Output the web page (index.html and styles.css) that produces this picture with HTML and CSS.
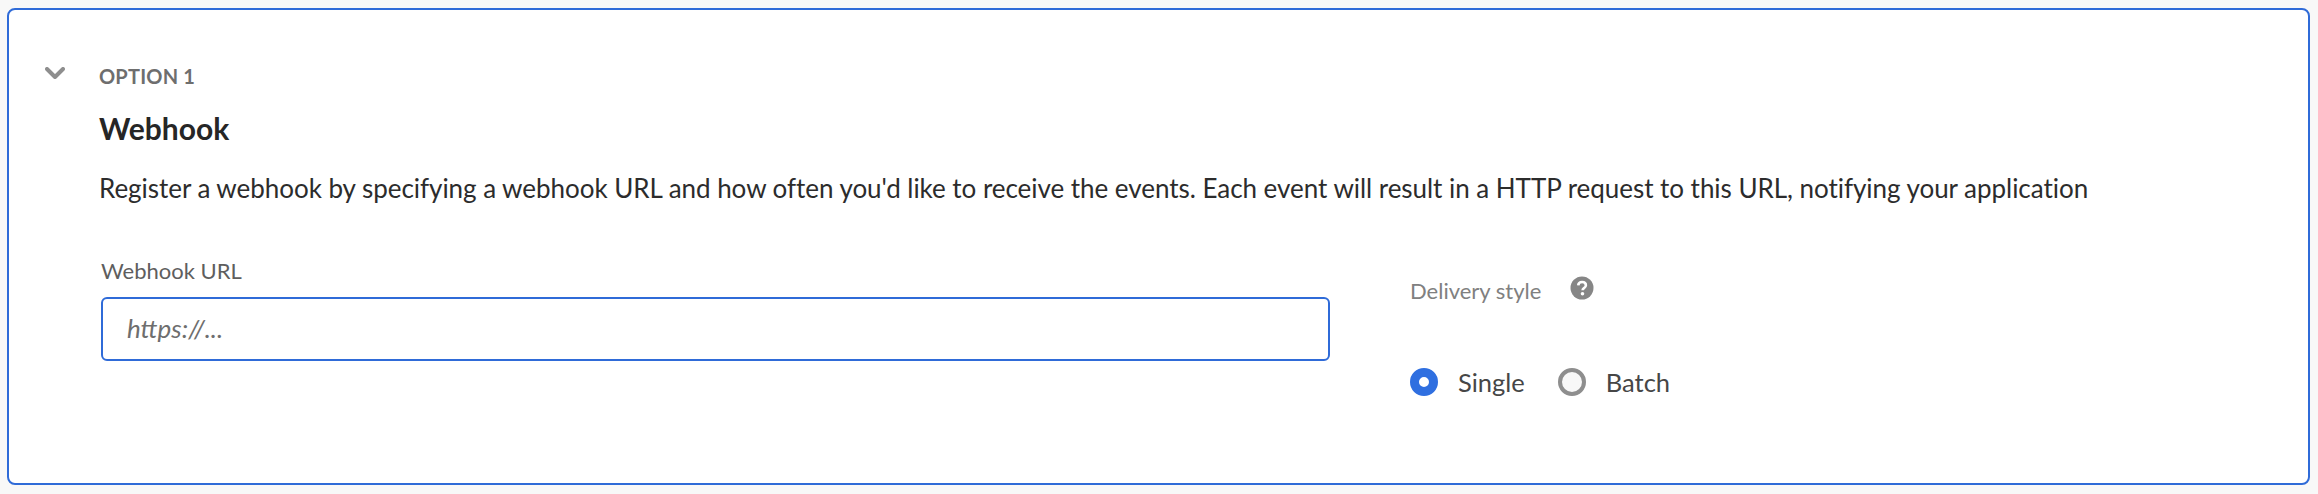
FILE: index.html
```html
<!DOCTYPE html>
<html lang="en">
<head>
<meta charset="utf-8">
<title>Webhook</title>
<link rel="stylesheet" href="styles.css">
</head>
<body>
<section class="card">
  <div class="head">
    <svg class="chevron" width="20" height="12" viewBox="0 0 20 12" aria-hidden="true"><path d="M2 2 L10 10 L18 2" fill="none" stroke="#8e8e8e" stroke-width="4" stroke-linecap="round" stroke-linejoin="round"/></svg>
    <div class="eyebrow">OPTION 1</div>
  </div>
  <div class="content">
    <h2 class="title">Webhook</h2>
    <p class="desc">Register a webhook by specifying a webhook URL and how often you'd like to receive the events. Each event will result in a HTTP request to this URL, notifying your application</p>
    <div class="fields">
      <div class="url-field">
        <label class="url-label" for="url">Webhook URL</label>
        <input class="url-input" id="url" type="text" placeholder="https://...">
      </div>
      <div class="delivery">
        <div class="delivery-head">
          <span class="delivery-label">Delivery style</span>
          <svg class="help" width="24" height="24" viewBox="0 0 24 24" aria-hidden="true"><circle cx="12" cy="12" r="11.5" fill="#868686"/><path d="M8.2 9.4 C8.4 7.2 10 6 12.1 6 C14.3 6 15.9 7.3 15.9 9.2 C15.9 10.7 15 11.4 14 12.1 C13 12.8 12.6 13.2 12.6 14.2" fill="none" stroke="#fff" stroke-width="2.6"/><circle cx="12.5" cy="17.8" r="1.8" fill="#fff"/></svg>
        </div>
        <div class="radios">
          <label class="radio"><span class="dot dot-on"></span><span>Single</span></label>
          <label class="radio"><span class="dot"></span><span>Batch</span></label>
        </div>
      </div>
    </div>
  </div>
</section>
</body>
</html>
```
FILE: styles.css
```css
* { box-sizing: border-box; }
html, body { margin: 0; height: 494px; overflow: hidden; }
body {
  background: #f8f8f8;
  padding: 8px 8px 0 7px;
  font-family: Lato, "Open Sans", sans-serif;
  color: #2c2c2c;
}
.card {
  width: 2303px;
  height: 477px;
  background: #fff;
  border: 2px solid #2f6bd8;
  border-radius: 8px;
  padding: 50px 0 0 36px;
}
.head { display: flex; align-items: center; height: 32px; }
.chevron { display: block; margin-top: -6px; }
.eyebrow {
  margin-left: 34px;
  font-size: 20px;
  font-weight: 700;
  letter-spacing: 0.2px;
  color: #6e6e6e;
}
.content { padding-left: 54px; }
.title {
  margin: 16px 0 0;
  font-size: 30px;
  line-height: 40px;
  font-weight: 700;
  color: #262626;
}
.desc {
  margin: 24px 0 0;
  font-size: 26px;
  line-height: 32px;
  letter-spacing: -0.04px;
  white-space: nowrap;
}
.fields { display: flex; margin-top: 53px; }
.url-field { width: 1229px; margin-left: 2px; }
.url-label {
  display: block;
  font-size: 22px;
  line-height: 28px;
  color: #5e5e5e;
}
.url-input {
  display: block;
  width: 100%;
  height: 64px;
  margin-top: 12px;
  padding: 0 24px 3px;
  background: #fff;
  border: 2px solid #2f6bd8;
  border-radius: 6px;
  outline: none;
  font: italic 26px Lato, "Open Sans", sans-serif;
}
.url-input::placeholder { color: #6e6e6e; opacity: 1; }
.delivery { margin-left: 80px; padding-top: 18px; }
.delivery-head { display: flex; align-items: center; height: 32px; }
.delivery-label { font-size: 22px; color: #808080; margin-top: -2px; }
.help { margin-left: 29px; display: block; margin-top: -6px; }
.radios { display: flex; gap: 33px; margin-top: 60px; }
.radio { display: flex; align-items: center; gap: 20px; font-size: 25.5px; color: #464646; }
.dot {
  width: 28px; height: 28px;
  border-radius: 50%;
  background: #f8f8f8;
  border: 4px solid #8e8e8e;
}
.dot-on { border: 9px solid #2f6fe0; background: #fff; }
```
